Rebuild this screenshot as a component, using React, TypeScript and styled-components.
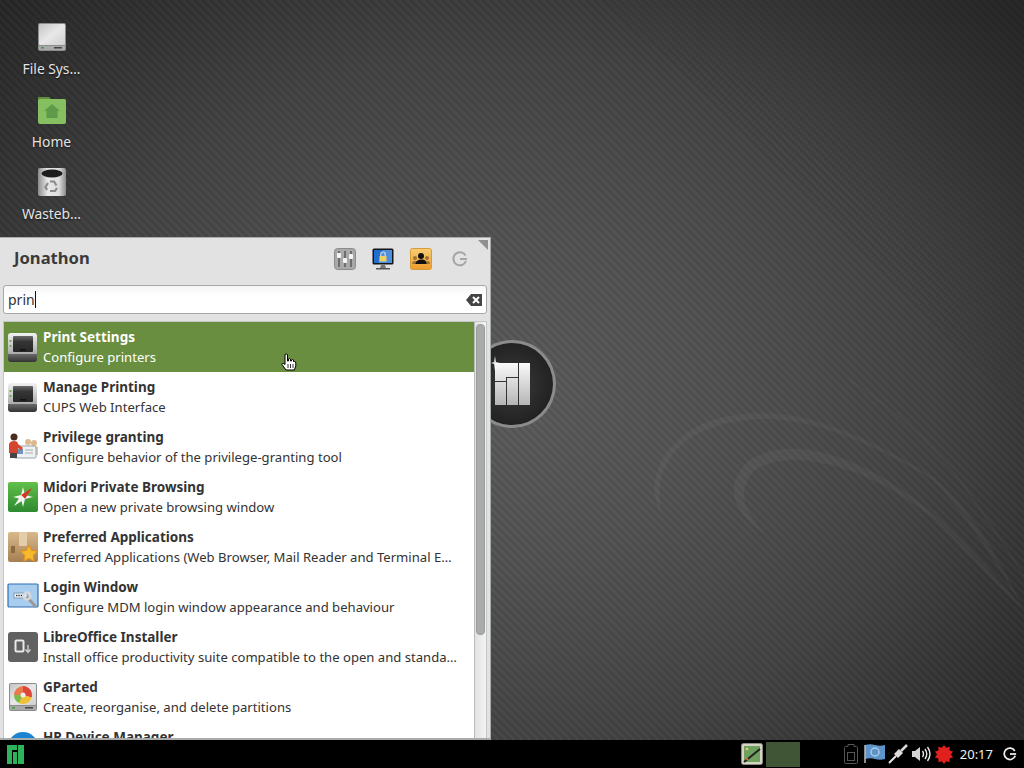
import styled, { createGlobalStyle } from "styled-components";
import type { ReactNode } from "react";

const Global = createGlobalStyle`
  html, body { margin: 0; padding: 0; background: #222; overflow: hidden; }
  * { box-sizing: border-box; }
`;

const Desktop = styled.div`
  position: relative;
  width: 1024px;
  height: 768px;
  display: flex;
  flex-direction: column;
  overflow: hidden;
  font-family: "Noto Sans", "Open Sans", sans-serif;
  background:
    repeating-linear-gradient(45deg, rgba(0,0,0,.07) 0 3px, rgba(255,255,255,.012) 3px 5.66px),
    radial-gradient(ellipse 700px 560px at 500px 400px, #5c5c5c 0%, #535353 30%, #444 62%, #303030 88%, #282828 100%);
`;

const Swirl = styled.svg`
  position: absolute;
  left: 0;
  top: 0;
`;

const Logo = styled.div`
  position: absolute;
  left: 468px;
  top: 340px;
  width: 88px;
  height: 88px;
`;

const Workspace = styled.div`
  position: relative;
  flex: 1;
  display: flex;
  flex-direction: column;
  min-height: 0;
`;

const IconColumn = styled.div`
  display: flex;
  flex-direction: column;
  flex: none;
  width: 103px;
  height: 237px;
  padding-top: 21px;
`;

const DesktopItem = styled.div`
  height: 72.5px;
  flex: none;
  display: flex;
  flex-direction: column;
  align-items: center;
  gap: 6px;
  color: #e4e4e4;
  font-size: 13.8px;
  line-height: 19px;
  text-shadow: 0 1px 2px rgba(0,0,0,.7);
`;

const Menu = styled.div`
  position: relative;
  flex: none;
  width: 491px;
  height: 503px;
  background: #e2e2e2;
  border: 1px solid #a9abab;
  border-left: 0;
  border-bottom-width: 2px;
  display: flex;
  flex-direction: column;
  padding: 0 3px 0 3px;
`;

const Corner = styled.div`
  position: absolute;
  right: 2px;
  top: 2px;
  width: 0;
  height: 0;
  border-top: 10px solid #8f9191;
  border-left: 10px solid transparent;
`;

const MenuHeader = styled.div`
  height: 47px;
  display: flex;
  align-items: center;
  padding-left: 11px;
`;

const UserName = styled.div`
  flex: 1;
  font-size: 16.6px;
  font-weight: 700;
  color: #3a3a3a;
  padding-bottom: 8px;
`;

const HeaderIcons = styled.div`
  display: flex;
  align-items: center;
  gap: 16px;
  padding-right: 19px;
  padding-bottom: 5px;
`;

const PowerSlot = styled.div`
  display: flex;
  margin-left: 4px;
`;

const SearchBox = styled.div`
  height: 29px;
  background: linear-gradient(#f6f6f6, #fff 40%);
  border: 1px solid #a8a8a8;
  border-radius: 3px;
  display: flex;
  align-items: center;
  padding: 0 4px 0 4px;
  font-size: 14px;
  color: #333;
`;

const Caret = styled.span`
  width: 1px;
  height: 17px;
  background: #111;
`;

const SearchSpacer = styled.div`
  flex: 1;
`;

const ListFrame = styled.div`
  margin-top: 7px;
  height: 417px;
  background: #fff;
  border: 1px solid #c4c6c6;
  border-bottom: 0;
  display: flex;
  overflow: hidden;
`;

const List = styled.div`
  flex: 1;
  min-width: 0;
  overflow: hidden;
`;

const Row = styled.div<{ $active?: boolean }>`
  height: 50px;
  display: flex;
  align-items: center;
  padding-left: 3px;
  gap: 4px;
  background: ${(p) => (p.$active ? "#6a8e40" : "#fff")};
  color: ${(p) => (p.$active ? "#fff" : "#333")};
`;

const RowIcon = styled.div`
  width: 32px;
  height: 32px;
  flex: none;
`;

const RowText = styled.div`
  min-width: 0;
  flex: 1;
  padding-right: 14px;
`;

const RowTitle = styled.div`
  font-size: 13.5px;
  font-weight: 700;
  line-height: 20px;
  white-space: nowrap;
`;

const RowSub = styled.div`
  font-size: 13.1px;
  line-height: 20px;
  white-space: nowrap;
  overflow: hidden;
  text-overflow: ellipsis;
`;

const ScrollTrack = styled.div`
  width: 12px;
  flex: none;
  background: linear-gradient(90deg, #e0e2e3, #f3f3f4);
  border-left: 1px solid #b9bbbb;
  padding: 2px 1px;
`;

const ScrollThumb = styled.div`
  width: 9px;
  height: 311px;
  background: #a9abab;
  border: 1px solid #9a9c9c;
  border-radius: 4px;
`;

const Pointer = styled.svg`
  position: absolute;
  left: 281px;
  top: 353px;
`;

const Panel = styled.div`
  height: 28px;
  flex: none;
  background: #000;
  display: flex;
  align-items: center;
  color: #eee;
`;

const StartButton = styled.div`
  width: 30px;
  display: flex;
  justify-content: center;
`;

const PanelSpacer = styled.div`
  flex: 1;
`;

const TaskButton = styled.div`
  width: 34px;
  height: 25px;
  margin: 0 44px 0 3px;
  background: #3f5536;
`;

const Tray = styled.div`
  display: flex;
  align-items: center;
  gap: 3px;
`;

const BatterySlot = styled.div`
  display: flex;
  margin-right: 3px;
`;

const Clock = styled.div`
  font-size: 13px;
  margin: 0 10px 0 6px;
  color: #f0f0f0;
`;

const PanelEnd = styled.div`
  width: 7px;
`;

const DriveIcon = ({ size = 32, disc = false }: { size?: number; disc?: boolean }) => (
  <svg width={size} height={size} viewBox="0 0 32 32">
    <defs>
      <linearGradient id="drv" x1="0" y1="0" x2="1" y2="1">
        <stop offset="0" stopColor="#c4c4c4" />
        <stop offset=".5" stopColor="#e8e8e8" />
        <stop offset="1" stopColor="#cfcfcf" />
      </linearGradient>
    </defs>
    <rect x="2" y="2" width="28" height="28" rx="2" fill="#8c8c8c" />
    <rect x="3" y="3" width="26" height="21" rx="1" fill="url(#drv)" />
    <rect x="3" y="25" width="26" height="4" fill="#a9a9a9" />
    <rect x="5" y="26" width="3" height="1.5" fill="#3e9a3e" />
    <rect x="18" y="26" width="8" height="1.5" fill="#444" />
    {disc && (
      <g>
        <path d="M16 5a9 9 0 0 1 8.6 11.5L16 14Z" fill="#e0453a" />
        <path d="M24.6 16.5A9 9 0 0 1 12 22L16 14Z" fill="#f0c030" />
        <path d="M12 22A9 9 0 0 1 7 14H16Z" fill="#7cb84a" />
        <path d="M7 14A9 9 0 0 1 16 5V14Z" fill="#e97a4a" />
        <circle cx="16" cy="14" r="2.5" fill="#eee" />
      </g>
    )}
  </svg>
);

const FolderIcon = () => (
  <svg width="32" height="32" viewBox="0 0 32 32">
    <path d="M2 3h11l2 2h14v6H2Z" fill="#5f8f3e" />
    <rect x="2" y="5" width="28" height="25" rx="2" fill="#86bf60" />
    <path d="M16 10l8 7h-2.5v7h-11v-7H8Z" fill="#5f9a4a" />
  </svg>
);

const TrashIcon = () => (
  <svg width="32" height="32" viewBox="0 0 32 32">
    <defs>
      <linearGradient id="trs" x1="0" x2="1">
        <stop offset="0" stopColor="#8c8c8c" />
        <stop offset=".35" stopColor="#e8e8e8" />
        <stop offset=".75" stopColor="#dcdcdc" />
        <stop offset="1" stopColor="#8a8a8a" />
      </linearGradient>
    </defs>
    <rect x="2" y="2" width="28" height="28" rx="2" fill="url(#trs)" />
    <ellipse cx="16" cy="7.5" rx="10.5" ry="4" fill="#1c1c1c" />
    <path d="M14 15.5h4l2.5 4M21 22l-2 3h-5M11 24l-1.5-3 2.5-4" fill="none" stroke="#8a8a8a" strokeWidth="2.2" />
  </svg>
);

const PrinterIcon = () => (
  <svg width="32" height="32" viewBox="0 0 32 32">
    <defs>
      <linearGradient id="prnBody" x1="0" y1="0" x2="0" y2="1">
        <stop offset="0" stopColor="#f2f2f2" />
        <stop offset="1" stopColor="#a6a6a6" />
      </linearGradient>
      <linearGradient id="prnTray" x1="0" y1="0" x2="0" y2="1">
        <stop offset="0" stopColor="#6a6a6a" />
        <stop offset=".35" stopColor="#353535" />
        <stop offset="1" stopColor="#262626" />
      </linearGradient>
      <linearGradient id="prnBase" x1="0" y1="0" x2="0" y2="1">
        <stop offset="0" stopColor="#6a6a6a" />
        <stop offset="1" stopColor="#333" />
      </linearGradient>
    </defs>
    <rect x="1" y="2" width="29" height="22" rx="3" fill="url(#prnBody)" />
    <path d="M1 23h29v5q0 3-3 3H4q-3 0-3-3Z" fill="url(#prnBase)" />
    <rect x="6" y="5" width="20" height="16" rx="1" fill="url(#prnTray)" />
    <rect x="2.5" y="9" width="2" height="2" fill="#6fb04f" />
    <rect x="2.5" y="14" width="2" height="2" fill="#6fb04f" />
    <rect x="13" y="18" width="6" height="1.5" fill="#111" />
  </svg>
);

const PrivilegeIcon = () => (
  <svg width="32" height="32" viewBox="0 0 32 32">
    <circle cx="21" cy="11" r="3" fill="#dcb98e" />
    <circle cx="27" cy="12" r="3" fill="#dcb98e" />
    <path d="M16 24v-8q5-3 15 0v8Z" fill="#d9c6a8" />
    <rect x="7" y="15" width="22" height="12" rx="1" fill="#eef1f3" stroke="#9aa3a8" />
    <rect x="10" y="18" width="6" height="5" fill="#6f93b8" />
    <path d="M18 19h8M18 22h8" stroke="#a6adb2" />
    <circle cx="7" cy="6" r="3.5" fill="#4a2c20" />
    <path d="M2 22V13q1-3 5-3t4 3l5 4-2 2-3-2v5Z" fill="#d5452e" />
    <path d="M3 22h7v5H3Z" fill="#444" />
  </svg>
);

const MidoriIcon = () => (
  <svg width="32" height="32" viewBox="0 0 32 32">
    <defs>
      <linearGradient id="mid" x1="0" y1="0" x2="0" y2="1">
        <stop offset="0" stopColor="#62c04a" />
        <stop offset="1" stopColor="#2c8a30" />
      </linearGradient>
    </defs>
    <rect x="1" y="1" width="30" height="30" rx="2" fill="url(#mid)" />
    <path d="M16 6l2 8 8 2-8 2-2 8-2-8-8-2 8-2Z" fill="#f3f6ea" />
    <path d="M25 7l-7 11-4-4Z" fill="#d8332b" />
    <path d="M7 25l7-11 4 4Z" fill="#f0f0f0" />
  </svg>
);

const PackageIcon = () => (
  <svg width="32" height="32" viewBox="0 0 32 32">
    <defs>
      <linearGradient id="pkg" x1="0" y1="0" x2="0" y2="1">
        <stop offset="0" stopColor="#d9b98c" />
        <stop offset="1" stopColor="#a57f52" />
      </linearGradient>
    </defs>
    <rect x="1" y="1" width="30" height="30" rx="2" fill="url(#pkg)" />
    <rect x="12" y="1" width="8" height="14" fill="#e3cda9" />
    <rect x="4" y="15" width="4" height="7" fill="#8a6a42" />
    <path d="M22 14l2.6 5.4 5.9.8-4.3 4.1 1 5.9-5.2-2.8-5.2 2.8 1-5.9-4.3-4.1 5.9-.8Z" fill="#f5b92c" stroke="#e58f1e" />
  </svg>
);

const LoginIcon = () => (
  <svg width="32" height="32" viewBox="0 0 32 32">
    <rect x="1" y="3" width="30" height="23" rx="1" fill="#a9cdee" stroke="#2f6fb3" strokeWidth="1.2" />
    <rect x="7" y="12" width="13" height="5" fill="#eef5fb" stroke="#7d9cb8" />
    <path d="M9 14.5h8" stroke="#333" strokeWidth="1.6" strokeDasharray="1.4 1" />
    <path d="M20 16l9 10" stroke="#9a9a9a" strokeWidth="3" />
    <circle cx="20" cy="15" r="3.5" fill="none" stroke="#d8d8d8" strokeWidth="2.4" />
  </svg>
);

const OfficeIcon = () => (
  <svg width="32" height="32" viewBox="0 0 32 32">
    <rect x="1" y="1" width="30" height="30" rx="3" fill="#616161" />
    <rect x="8.5" y="9.5" width="8" height="11" rx="1" fill="none" stroke="#e8e8e8" strokeWidth="2" />
    <path d="M21 14v6M18.5 18.5l2.5 3 2.5-3" fill="none" stroke="#cfcfcf" strokeWidth="1.4" />
  </svg>
);

const HpIcon = () => (
  <svg width="32" height="32" viewBox="0 0 32 32">
    <circle cx="16" cy="16" r="15" fill="#1b83cf" />
  </svg>
);

const MixerIcon = () => (
  <svg width="22" height="22" viewBox="0 0 22 22">
    <rect x="0.5" y="0.5" width="21" height="21" rx="3" fill="#a9a9a9" stroke="#8c8c8c" />
    <path d="M5 3v16M11 3v16M17 3v16" stroke="#333" />
    <rect x="3" y="5" width="4" height="5" rx="1" fill="#f4f4f4" />
    <rect x="9" y="10" width="4" height="5" rx="1" fill="#f4f4f4" />
    <rect x="15" y="6" width="4" height="5" rx="1" fill="#f4f4f4" />
  </svg>
);

const ScreenLockIcon = () => (
  <svg width="22" height="22" viewBox="0 0 22 22">
    <rect x="0.5" y="0.5" width="21" height="16" rx="1.5" fill="#151515" />
    <rect x="2" y="2" width="18" height="13" fill="#1f6fd0" />
    <path d="M11 2h9v13H6Z" fill="#4c90de" />
    <rect x="7.5" y="8" width="7" height="5.5" fill="#f0d060" />
    <path d="M8.8 8V6.2a2.2 2.2 0 0 1 4.4 0V8" fill="none" stroke="#d8d8d8" strokeWidth="1.2" />
    <path d="M9 17h4l1 3H8Z" fill="#777" />
    <rect x="4" y="20" width="14" height="1.5" fill="#555" />
  </svg>
);

const UsersIcon = () => (
  <svg width="22" height="22" viewBox="0 0 22 22">
    <defs>
      <linearGradient id="usr" x1="0" y1="0" x2="0" y2="1">
        <stop offset="0" stopColor="#f7cd72" />
        <stop offset="1" stopColor="#ee9d2c" />
      </linearGradient>
    </defs>
    <rect x="0.5" y="0.5" width="21" height="21" rx="2" fill="url(#usr)" stroke="#d99a3a" />
    <circle cx="5" cy="10" r="2" fill="#9c7436" />
    <circle cx="17" cy="10" r="2" fill="#9c7436" />
    <path d="M2 16q0-3 3-3t3 3ZM14 16q0-3 3-3t3 3Z" fill="#9c7436" />
    <circle cx="11" cy="8" r="3" fill="#111" />
    <path d="M5.5 16q0-4 5.5-4.5t5.500 4.500Z" fill="#111" />
  </svg>
);

const PowerIcon = ({ color, size }: { color: string; size: number }) => (
  <svg width={size} height={size} viewBox="0 0 16 16">
    <path d="M13.5 4.500A6.500 6.500 0 1 0 14 10" fill="none" stroke={color} strokeWidth="2" />
    <path d="M8 8h7" stroke={color} strokeWidth="2" />
  </svg>
);

const ClearIcon = () => (
  <svg width="16" height="12" viewBox="0 0 16 12">
    <path d="M5 0h11v12H5L0 6Z" fill="#444" />
    <path d="M7 3l6 6M13 3l-6 6" stroke="#fff" strokeWidth="2" />
  </svg>
);

const ManjaroMark = () => (
  <svg width="17" height="19" viewBox="0 0 17 19">
    <path d="M0 0h10v5H5v14H0ZM6 7h4v12H6ZM11 0h6v19h-6Z" fill="#2fb35a" />
  </svg>
);

const WallLogo = () => (
  <svg width="88" height="88" viewBox="0 0 88 88">
    <defs>
      <linearGradient id="bar" gradientUnits="userSpaceOnUse" x1="0" y1="23" x2="0" y2="65">
        <stop offset="0" stopColor="#fafafa" />
        <stop offset="1" stopColor="#b5b5b5" />
      </linearGradient>
      <radialGradient id="disc">
        <stop offset="0" stopColor="#3b3b3b" />
        <stop offset="1" stopColor="#222" />
      </radialGradient>
    </defs>
    <circle cx="44" cy="44" r="44" fill="#8b8b8b" />
    <circle cx="44" cy="44" r="41" fill="url(#disc)" />
    <path d="M27 23h23v14H38v4H27Z" fill="url(#bar)" />
    <rect x="27" y="42" width="11" height="23" fill="url(#bar)" />
    <rect x="39" y="38" width="11" height="27" fill="url(#bar)" />
    <rect x="51" y="23" width="11" height="42" fill="url(#bar)" />
    <path d="M27 16l1 6 4 1-4 1-1 7-1-7-3-1 3-1Z" fill="#fff" opacity=".85" />
  </svg>
);

const MateTask = () => (
  <svg width="22" height="22" viewBox="0 0 22 22">
    <rect x="0.5" y="0.5" width="21" height="21" rx="2" fill="#d4d4c4" stroke="#8a8a80" />
    <rect x="3" y="3" width="16" height="16" fill="#6fa060" />
    <path d="M3 19L19 6" stroke="#222" strokeWidth="2" />
    <circle cx="6" cy="6" r="1.3" fill="#e4d060" />
    <circle cx="6" cy="16" r="1.3" fill="#d06a40" />
  </svg>
);

const Battery = () => (
  <svg width="14" height="20" viewBox="0 0 14 20">
    <path d="M4 .5h6v2h2.5q1 0 1 1v15q0 1-1 1h-11q-1 0-1-1v-15q0-1 1-1H4Z" fill="none" stroke="#555" />
    <rect x="3.5" y="8.5" width="7" height="8" fill="none" stroke="#555" />
  </svg>
);

const FlagIcon = () => (
  <svg width="21" height="20" viewBox="0 0 21 20">
    <path d="M1 1q5-1.5 10 0t10 0v14q-5 1.500-10 0t-10 0Z" fill="#5d93c9" />
    <circle cx="11" cy="8" r="4" fill="none" stroke="#a9cbe8" strokeWidth="1.5" />
    <path d="M1 1v18" stroke="#bbb" strokeWidth="1.5" />
  </svg>
);

const PlugIcon = () => (
  <svg width="20" height="20" viewBox="0 0 20 20">
    <path d="M1 19L8 12" stroke="#e8e8e8" strokeWidth="2" />
    <path d="M6 10l5-5 4 4-5 5Z" fill="#dcdcdc" />
    <path d="M13 7l6-6" stroke="#d8d8d8" strokeWidth="2.5" />
  </svg>
);

const SpeakerIcon = () => (
  <svg width="20" height="18" viewBox="0 0 20 18">
    <path d="M1 6h3l5-4v14l-5-4H1Z" fill="#d4d4d4" />
    <path d="M11.5 6q2 3 0 6M14 4q3.5 5 0 10M16.5 2q5 7 0 14" fill="none" stroke="#e8e8e8" strokeWidth="1.4" />
  </svg>
);

const BurstIcon = () => {
  const pts = Array.from({ length: 20 }, (_, i) => {
    const r = i % 2 ? 7 : 9.5;
    const a = (i * Math.PI) / 10;
    return `${10 + r * Math.sin(a)},${9.5 - r * Math.cos(a)}`;
  }).join(" ");
  return (
    <svg width="20" height="19" viewBox="0 0 20 19">
      <polygon points={pts} fill="#e0201c" />
    </svg>
  );
};

const HandCursor = () => (
  <Pointer width="17" height="18" viewBox="0 0 17 18">
    <path
      d="M4 1.5q1.5-1 2.5 0V8h1V6q1.5-1 2 0v2h1V7q1.5-1 2 0v1.5h.8q1.5 0 1.5 1.5v3l-1.5 4H5L1 11.500q0-1.500 1.500-1L4 11.500Z"
      fill="#fff"
      stroke="#000"
      strokeWidth="1"
    />
    <path d="M7 11v4M9.5 11v4M12 11v4" stroke="#000" strokeWidth=".8" />
  </Pointer>
);

interface IEntry {
  title: string;
  sub?: string;
  icon: ReactNode;
}

const entries: IEntry[] = [
  { title: "Print Settings", sub: "Configure printers", icon: <PrinterIcon /> },
  { title: "Manage Printing", sub: "CUPS Web Interface", icon: <PrinterIcon /> },
  { title: "Privilege granting", sub: "Configure behavior of the privilege-granting tool", icon: <PrivilegeIcon /> },
  { title: "Midori Private Browsing", sub: "Open a new private browsing window", icon: <MidoriIcon /> },
  { title: "Preferred Applications", sub: "Preferred Applications (Web Browser, Mail Reader and Terminal Emulator)", icon: <PackageIcon /> },
  { title: "Login Window", sub: "Configure MDM login window appearance and behaviour", icon: <LoginIcon /> },
  { title: "LibreOffice Installer", sub: "Install office productivity suite compatible to the open and standard formats", icon: <OfficeIcon /> },
  { title: "GParted", sub: "Create, reorganise, and delete partitions", icon: <DriveIcon disc /> },
  { title: "HP Device Manager", sub: "View device status", icon: <HpIcon /> },
];

const desktopItems = [
  { label: "File Sys…", icon: <DriveIcon /> },
  { label: "Home", icon: <FolderIcon /> },
  { label: "Wasteb…", icon: <TrashIcon /> },
];

export default function App() {
  return (
    <Desktop>
      <Global />
      <Swirl width="1024" height="768" viewBox="0 0 1024 768" fill="none">
        {/* outer and inner crescents, then the thin sweep on the right */}
        <path d="M662 513C648 495 650 450 700 425C770 395 850 425 933 477C975 510 1005 570 1024 610C1000 570 970 520 933 480C850 430 775 402 705 430C660 450 655 490 662 513Z" fill="rgba(255,255,255,.035)" />
        <path d="M767 535C735 515 720 485 750 460C785 438 850 445 933 513C970 545 1000 580 1024 610C995 585 965 550 933 518C860 462 790 448 755 470C735 490 745 515 767 535Z" fill="rgba(255,255,255,.04)" />
        <path d="M850 380Q925 430 967 490T1024 577" stroke="rgba(255,255,255,.04)" strokeWidth="1.5" />
      </Swirl>
      <Logo>
        <WallLogo />
      </Logo>
      <Workspace>
        <IconColumn>
          {desktopItems.map((item) => (
            <DesktopItem key={item.label}>
              {item.icon}
              <span>{item.label}</span>
            </DesktopItem>
          ))}
        </IconColumn>
        <Menu>
          <Corner />
          <MenuHeader>
            <UserName>Jonathon</UserName>
            <HeaderIcons>
              <MixerIcon />
              <ScreenLockIcon />
              <UsersIcon />
              <PowerSlot>
                <PowerIcon color="#a5a5a5" size={16} />
              </PowerSlot>
            </HeaderIcons>
          </MenuHeader>
          <SearchBox>
            <span>prin</span>
            <Caret />
            <SearchSpacer />
            <ClearIcon />
          </SearchBox>
          <ListFrame>
            <List>
              {entries.map((entry, i) => (
                <Row key={entry.title} $active={i === 0}>
                  <RowIcon>{entry.icon}</RowIcon>
                  <RowText>
                    <RowTitle>{entry.title}</RowTitle>
                    <RowSub>{entry.sub}</RowSub>
                  </RowText>
                </Row>
              ))}
            </List>
            <ScrollTrack>
              <ScrollThumb />
            </ScrollTrack>
          </ListFrame>
        </Menu>
      </Workspace>
      <Panel>
        <StartButton>
          <ManjaroMark />
        </StartButton>
        <PanelSpacer />
        <MateTask />
        <TaskButton />
        <Tray>
          <BatterySlot>
            <Battery />
          </BatterySlot>
          <FlagIcon />
          <PlugIcon />
          <SpeakerIcon />
          <BurstIcon />
        </Tray>
        <Clock>20:17</Clock>
        <PowerIcon color="#eee" size={14} />
        <PanelEnd />
      </Panel>
      <HandCursor />
    </Desktop>
  );
}
